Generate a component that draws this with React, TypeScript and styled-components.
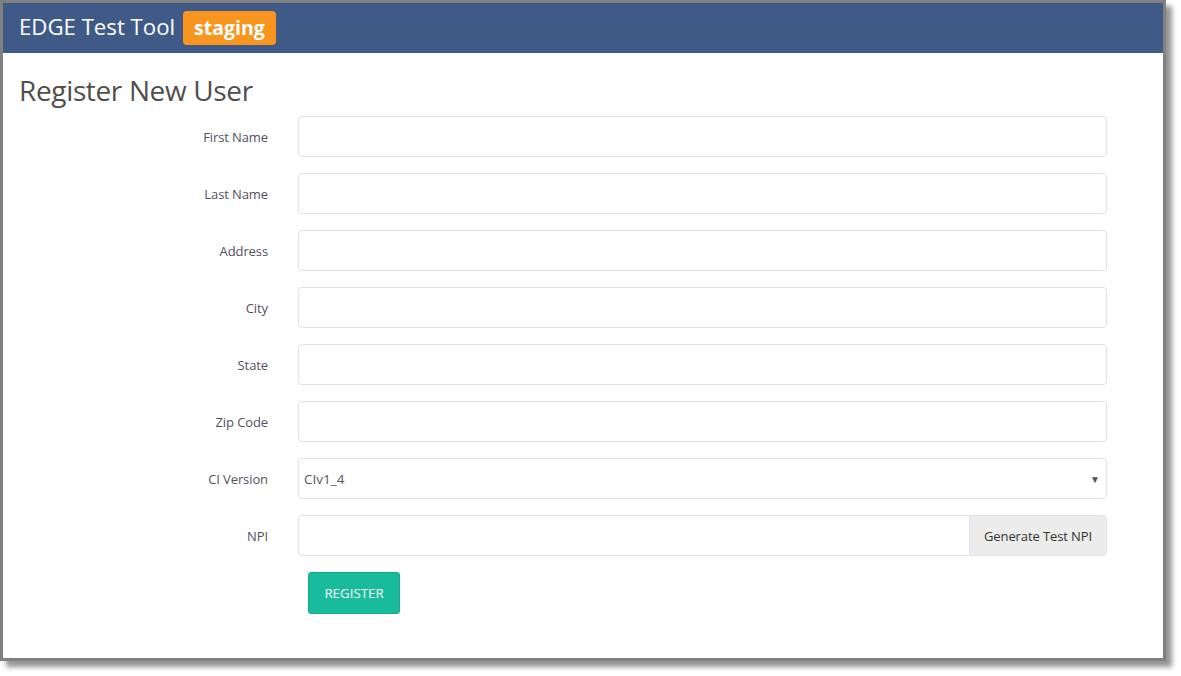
import React from "react";
import styled, { createGlobalStyle } from "styled-components";

const Global = createGlobalStyle`
  html, body { margin: 0; padding: 0; background: #ffffff; }
  body { font-family: "Open Sans", "Noto Sans", Arial, sans-serif; }
  * { box-sizing: border-box; }
`;

const Page = styled.div`
  width: 1181px;
  height: 676px;
  background: #ffffff;
`;

const Window = styled.div`
  width: 1166px;
  height: 661px;
  border: 3px solid #808080;
  background: #ffffff;
  box-shadow: 6px 6px 5px rgba(0, 0, 0, 0.42);
  display: flex;
  flex-direction: column;
`;

const NavBar = styled.header`
  height: 50px;
  background: #3f5a86;
  display: flex;
  align-items: center;
  padding-left: 16px;
  gap: 8px;
`;

const Brand = styled.span`
  color: #ffffff;
  font-size: 22.2px;
  letter-spacing: 0;
  line-height: 1;
  margin-top: -2px;
`;

const Badge = styled.span`
  background: #f7951e;
  color: #ffffff;
  font-weight: 700;
  font-size: 19.5px;
  line-height: 34px;
  height: 34px;
  padding: 0 11px;
  border-radius: 4px;
  margin-top: -1px;
`;

const Content = styled.main`
  padding: 19px 16px 0 16px;
`;

const Title = styled.h1`
  margin: 0 0 8px 0;
  font-weight: 400;
  font-size: 28px;
  line-height: 36px;
  color: #4f4f4f;
  letter-spacing: -0.35px;
`;

const Form = styled.form`
  display: grid;
  grid-template-columns: 249px 809px;
  column-gap: 30px;
  row-gap: 16px;
`;

const Label = styled.label`
  text-align: right;
  font-size: 13px;
  color: #555060;
  align-self: center;
  letter-spacing: -0.1px;
`;

const Input = styled.input`
  height: 41px;
  width: 100%;
  border: 1px solid #dce3ec;
  border-radius: 4px;
  background: #ffffff;
  font: inherit;
  font-size: 14px;
  padding: 0 6px;
  outline: none;
`;

const SelectWrap = styled.div`
  position: relative;
  height: 41px;
`;

const Select = styled.select`
  appearance: none;
  -webkit-appearance: none;
  height: 41px;
  width: 100%;
  border: 1px solid #dce3ec;
  border-radius: 4px;
  background: #ffffff;
  font: inherit;
  font-size: 13.5px;
  color: #555;
  padding: 0 5px;
  outline: none;
`;

const Arrow = styled.span`
  position: absolute;
  right: 7px;
  top: 14px;
  font-size: 10px;
  color: #555;
  pointer-events: none;
`;

const InputGroup = styled.div`
  display: flex;
  height: 41px;
`;

const GroupInput = styled(Input)`
  flex: 1;
  border-radius: 4px 0 0 4px;
  border-right: none;
`;

const AddonButton = styled.button`
  width: 138px;
  height: 41px;
  background: #ececec;
  border: 1px solid #dce3ec;
  border-radius: 0 4px 4px 0;
  font: inherit;
  font-size: 13px;
  color: #333;
  letter-spacing: -0.1px;
  padding: 0;
`;

const Spacer = styled.div``;

const SubmitButton = styled.button`
  justify-self: start;
  margin-left: 10px;
  width: 92px;
  height: 42px;
  background: #18bc9c;
  border: 1px solid #15a98b;
  border-radius: 3px;
  color: #ffffff;
  font: inherit;
  font-size: 13.3px;
  letter-spacing: 0;
  text-transform: uppercase;
  padding: 0;
`;

const fields = ["First Name", "Last Name", "Address", "City", "State", "Zip Code"];

export default function App() {
  return (
    <Page>
      <Global />
      <Window>
        <NavBar>
          <Brand>EDGE Test Tool</Brand>
          <Badge>staging</Badge>
        </NavBar>
        <Content>
          <Title>Register New User</Title>
          <Form onSubmit={(e) => e.preventDefault()}>
            {fields.map((f) => (
              <React.Fragment key={f}>
                <Label>{f}</Label>
                <Input type="text" />
              </React.Fragment>
            ))}
            <Label>CI Version</Label>
            <SelectWrap>
              <Select defaultValue="CIv1_4">
                <option value="CIv1_4">CIv1_4</option>
              </Select>
              <Arrow>▼</Arrow>
            </SelectWrap>
            <Label>NPI</Label>
            <InputGroup>
              <GroupInput type="text" />
              <AddonButton type="button">Generate Test NPI</AddonButton>
            </InputGroup>
            <Spacer />
            <SubmitButton type="submit">Register</SubmitButton>
          </Form>
        </Content>
      </Window>
    </Page>
  );
}
